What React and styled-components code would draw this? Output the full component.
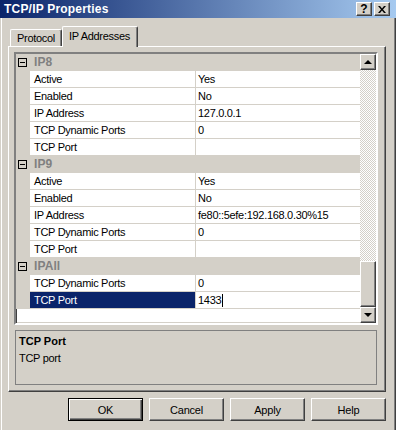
import React from 'react'
import styled, { createGlobalStyle } from 'styled-components';

const GlobalStyle = createGlobalStyle`
  html, body {
    margin: 0;
    padding: 0;
    background: #d4d0c8;
  }
  body {
    font-family: "Liberation Sans", Arial, sans-serif;
    font-size: 11px;
    color: #000;
  }
`;

const groups = [
  {
    name: 'IP8',
    props: [
      ['Active', 'Yes'],
      ['Enabled', 'No'],
      ['IP Address', '127.0.0.1'],
      ['TCP Dynamic Ports', '0'],
      ['TCP Port', ''],
    ],
  },
  {
    name: 'IP9',
    props: [
      ['Active', 'Yes'],
      ['Enabled', 'No'],
      ['IP Address', 'fe80::5efe:192.168.0.30%15'],
      ['TCP Dynamic Ports', '0'],
      ['TCP Port', ''],
    ],
  },
  {
    name: 'IPAll',
    props: [
      ['TCP Dynamic Ports', '0'],
      ['TCP Port', '1433', true],
    ],
  },
];

const raised = `
  border: 1px solid;
  border-color: #fff #404040 #404040 #fff;
  box-shadow: inset -1px -1px #808080, inset 1px 1px #d4d0c8;
`;

const App = () => {
  return (
    <>
      <GlobalStyle />
      <Window>
        <TitleBar>
          <Title>TCP/IP Properties</Title>
          <TitleButtons>
            <TitleButton>?</TitleButton>
            <TitleButton>
              <svg width="8" height="7" viewBox="0 0 8 7">
                <path d="M0 0h2l2 2.5L6 0h2L5 3.5 8 7H6L4 4.5 2 7H0l3-3.5z" fill="#000" />
              </svg>
            </TitleButton>
          </TitleButtons>
        </TitleBar>
        <Body>
          <Tabs>
            <Tab>Protocol</Tab>
            <Tab $active>IP Addresses</Tab>
          </Tabs>
          <Panel>
            <Grid>
              <Rows>
                {groups.map(g => (
                  <React.Fragment key={g.name}>
                    <Row $category>
                      <MarginCell>
                        <Toggle />
                      </MarginCell>
                      <CategoryName>{g.name}</CategoryName>
                    </Row>
                    {g.props.map(([label, value, selected]) => (
                      <Row key={g.name + label}>
                        <MarginCell />
                        <LabelCell $selected={selected}>{label}</LabelCell>
                        <ValueCell>
                          {value}
                          {selected && <Caret />}
                        </ValueCell>
                      </Row>
                    ))}
                  </React.Fragment>
                ))}
              </Rows>
              <ScrollBar>
                <ScrollButton>
                  <Arrow />
                </ScrollButton>
                <Track>
                  <Thumb />
                </Track>
                <ScrollButton>
                  <Arrow $down />
                </ScrollButton>
              </ScrollBar>
            </Grid>
            <Description>
              <DescTitle>TCP Port</DescTitle>
              <DescText>TCP port</DescText>
            </Description>
          </Panel>
          <ButtonRow>
            <DialogButton $default>OK</DialogButton>
            <DialogButton>Cancel</DialogButton>
            <DialogButton>Apply</DialogButton>
            <DialogButton>Help</DialogButton>
          </ButtonRow>
        </Body>
      </Window>
    </>
  )
}

const Window = styled.div`
  width: 396px;
  height: 430px;
  box-sizing: border-box;
  background: #d4d0c8;
  box-shadow: inset 1px 0 #d4d0c8, inset 2px 0 #fff, inset -1px 0 #404040, inset -2px 0 #808080;
  display: flex;
  flex-direction: column;
  overflow: hidden;
`;

const TitleBar = styled.div`
  height: 18px;
  flex: none;
  display: flex;
  align-items: center;
  justify-content: space-between;
  padding: 0 6px 0 4px;
  background: linear-gradient(to right, #0a246a, #a6caf0);
`;

const Title = styled.span`
  color: #fff;
  font-weight: bold;
  font-size: 12px;
  letter-spacing: 0.2px;
`;

const TitleButtons = styled.div`
  display: flex;
  gap: 2px;
`;

const TitleButton = styled.div`
  width: 16px;
  height: 14px;
  box-sizing: border-box;
  ${raised}
  background: #d4d0c8;
  display: flex;
  align-items: center;
  justify-content: center;
  font-weight: bold;
  font-size: 12px;
  line-height: 12px;
`;

const Body = styled.div`
  flex: 1;
  display: flex;
  flex-direction: column;
  padding: 8px 10px 0 8px;
`;

const Tabs = styled.div`
  display: flex;
  align-items: flex-end;
  height: 20px;
  padding-left: 2px;
`;

const Tab = styled.div`
  position: relative;
  z-index: ${p => (p.$active ? 1 : 0)};
  box-sizing: border-box;
  height: ${p => (p.$active ? '21px' : '17px')};
  margin-bottom: ${p => (p.$active ? '-1px' : '0')};
  padding: ${p => (p.$active ? '3px 7px 0 6px' : '2px 6px 0 6px')};
  background: #d4d0c8;
  border-top: 1px solid #fff;
  border-left: 1px solid #fff;
  border-right: 1px solid #404040;
  border-radius: 2px 2px 0 0;
  box-shadow: inset -1px 0 #808080;
  line-height: 13px;
  letter-spacing: -0.3px;
`;

const Panel = styled.div`
  display: flex;
  flex-direction: column;
  gap: 5px;
  padding: 5px 7px 6px 5px;
  border: 1px solid;
  border-color: #fff #404040 #404040 #fff;
  box-shadow: inset -1px -1px #808080;
`;

const Grid = styled.div`
  height: 273px;
  box-sizing: border-box;
  display: flex;
  border: 2px solid;
  border-color: #808080 #fff #fff #808080;
  box-shadow: inset 1px 1px #404040, inset -1px -1px #d4d0c8;
  background: #fff;
`;

const Rows = styled.div`
  flex: 1;
  overflow: hidden;
`;

const Row = styled.div`
  display: grid;
  grid-template-columns: 14px 166px 1fr;
  height: 17px;
  background: ${p => (p.$category ? '#d4d0c8' : '#fff')};
  line-height: 16px;
  letter-spacing: -0.3px;
  white-space: nowrap;
`;

const MarginCell = styled.div`
  background: #d4d0c8;
`;

const Toggle = styled.div`
  width: 9px;
  height: 9px;
  box-sizing: border-box;
  border: 1px solid #000;
  margin: 4px 0 0 2px;
  display: flex;
  align-items: center;
  justify-content: center;
  &::after {
    content: '';
    width: 5px;
    height: 1px;
    background: #000;
  }
`;

const CategoryName = styled.div`
  grid-column: 2 / 4;
  padding-left: 4px;
  font-weight: bold;
  font-size: 12px;
  line-height: 17px;
  color: #808080;
  letter-spacing: 0.1px;
`;

const LabelCell = styled.div`
  padding-left: 4px;
  border-bottom: 1px solid #d4d0c8;
  border-right: 1px solid #d4d0c8;
  background: ${p => (p.$selected ? '#0a246a' : '#fff')};
  color: ${p => (p.$selected ? '#fff' : '#000')};
`;

const ValueCell = styled.div`
  padding-left: 2px;
  border-bottom: 1px solid #d4d0c8;
  display: flex;
  align-items: center;
`;

const Caret = styled.span`
  display: inline-block;
  width: 1px;
  height: 13px;
  background: #000;
  margin-left: 1px;
`;

const ScrollBar = styled.div`
  width: 16px;
  display: flex;
  flex-direction: column;
`;

const ScrollButton = styled.div`
  width: 16px;
  height: 16px;
  box-sizing: border-box;
  ${raised}
  background: #d4d0c8;
  display: flex;
  align-items: center;
  justify-content: center;
`;

const Arrow = styled.div`
  width: 0;
  height: 0;
  border-left: 4px solid transparent;
  border-right: 4px solid transparent;
  ${p => (p.$down ? 'border-top: 4px solid #000;' : 'border-bottom: 4px solid #000;')}
`;

const Track = styled.div`
  flex: 1;
  display: flex;
  flex-direction: column;
  justify-content: flex-end;
  background-color: #fff;
  background-image: conic-gradient(#fff 25%, #d4d0c8 0 50%, #fff 0 75%, #d4d0c8 0);
  background-size: 2px 2px;
`;

const Thumb = styled.div`
  height: 46px;
  box-sizing: border-box;
  ${raised}
  background: #d4d0c8;
`;

const Description = styled.div`
  height: 55px;
  box-sizing: border-box;
  margin: 0 1px;
  border: 1px solid #808080;
  padding: 2px 3px;
  line-height: 17px;
  letter-spacing: -0.3px;
`;

const DescTitle = styled.div`
  font-weight: bold;
  letter-spacing: 0;
`;

const DescText = styled.div``;

const ButtonRow = styled.div`
  display: flex;
  justify-content: flex-end;
  gap: 6px;
  margin-top: 6px;
`;

const DialogButton = styled.div`
  width: 75px;
  height: 23px;
  box-sizing: border-box;
  display: flex;
  align-items: center;
  justify-content: center;
  background: #d4d0c8;
  border: 1px solid;
  border-color: ${p => (p.$default ? '#000' : '#fff #404040 #404040 #fff')};
  box-shadow: ${p =>
    p.$default
      ? 'inset 1px 1px #fff, inset -1px -1px #404040, inset -2px -2px #808080'
      : 'inset -1px -1px #808080, inset 1px 1px #d4d0c8'};
  letter-spacing: -0.2px;
`;

export default App
